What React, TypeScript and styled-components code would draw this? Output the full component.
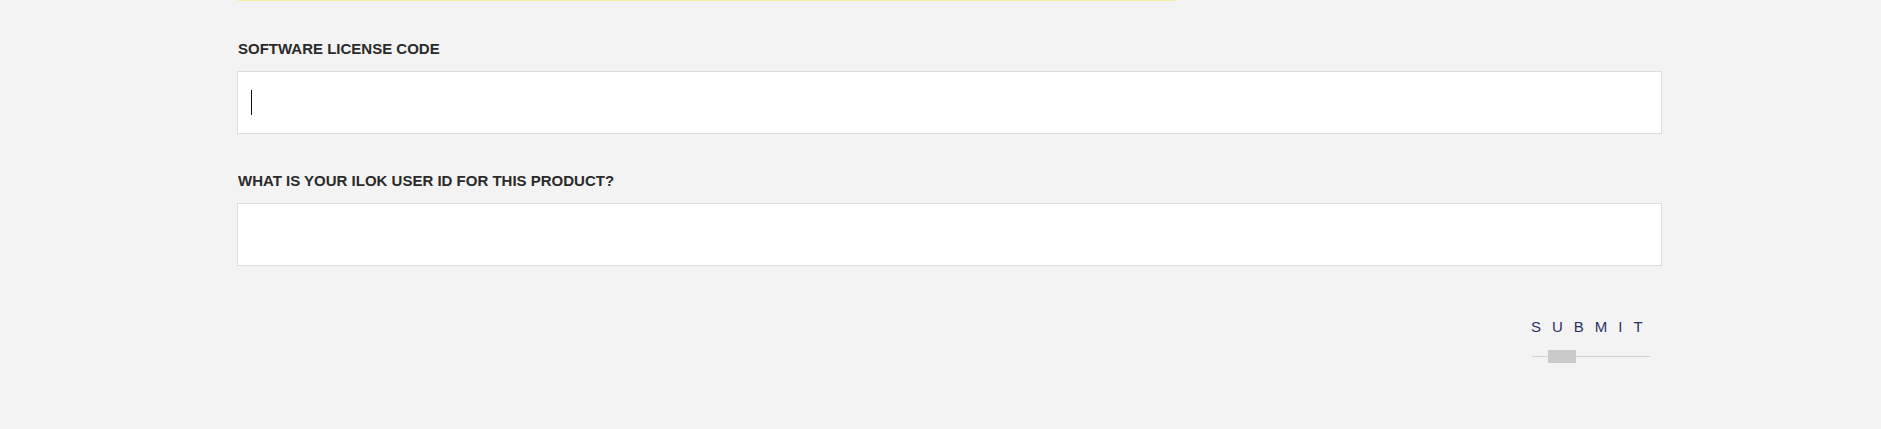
import React from "react";
import styled, { createGlobalStyle } from "styled-components";

const GlobalStyle = createGlobalStyle`
  html, body {
    margin: 0;
    padding: 0;
    background: #f3f3f3;
  }
  body {
    font-family: "Liberation Sans", Arial, sans-serif;
  }
`;

const Page = styled.div`
  width: 1881px;
  min-height: 429px;
  background: #f3f3f3;
  display: flex;
  flex-direction: column;
  box-sizing: border-box;
  padding-left: 237px;
`;

const Form = styled.form`
  width: 1425px;
  display: flex;
  flex-direction: column;
`;

const TopRule = styled.div`
  width: 938px;
  height: 1px;
  margin-left: 1px;
  background: #f6eca2;
`;

const FieldGroup = styled.div<{ $top: number }>`
  display: flex;
  flex-direction: column;
  margin-top: ${(p) => p.$top}px;
`;

const Label = styled.label`
  display: block;
  margin-left: 1px;
  font-family: "Liberation Sans", Arial, sans-serif;
  font-weight: 700;
  font-size: 15px;
  line-height: 18px;
  color: #2a2a2a;
  text-transform: uppercase;
`;

const InputWrap = styled.div`
  position: relative;
  margin-top: 13px;
`;

const TextInput = styled.input`
  display: block;
  width: 100%;
  height: 63px;
  box-sizing: border-box;
  border: 1px solid #dcdcdc;
  background: #ffffff;
  padding: 0 12px;
  margin: 0;
  font-family: "Liberation Sans", Arial, sans-serif;
  font-size: 18px;
  color: #222;
  outline: none;
  caret-color: transparent;
`;

const Caret = styled.span`
  position: absolute;
  left: 14px;
  top: 19px;
  width: 1px;
  height: 25px;
  background: #111;
  pointer-events: none;
`;

const ActionRow = styled.div`
  display: flex;
  justify-content: flex-end;
  padding-right: 12px;
  margin-top: 52px;
`;

const SubmitButton = styled.button`
  width: 118px;
  display: flex;
  flex-direction: column;
  align-items: flex-start;
  gap: 14px;
  padding: 0;
  margin: 0;
  border: none;
  background: transparent;
  cursor: pointer;
`;

const SubmitText = styled.span`
  display: block;
  margin-left: -1px;
  font-family: "Liberation Sans", Arial, sans-serif;
  font-size: 15px;
  line-height: 18px;
  letter-spacing: 11px;
  color: #2d3062;
  white-space: nowrap;
`;

const SliderTrack = styled.span`
  display: block;
  width: 118px;
  height: 13px;
  background:
    linear-gradient(#cacaca, #cacaca) 16px 0 / 28px 13px no-repeat,
    linear-gradient(#d0d0d0, #d0d0d0) 0 6px / 100% 1px no-repeat;
`;

export default function App() {
  return (
    <>
      <GlobalStyle />
      <Page>
        <Form onSubmit={(e) => e.preventDefault()}>
          <TopRule />
          <FieldGroup $top={39}>
            <Label htmlFor="license">Software License Code</Label>
            <InputWrap>
              <TextInput id="license" type="text" />
              <Caret />
            </InputWrap>
          </FieldGroup>
          <FieldGroup $top={38}>
            <Label htmlFor="ilok">What is your iLok User ID for this product?</Label>
            <InputWrap>
              <TextInput id="ilok" type="text" />
            </InputWrap>
          </FieldGroup>
          <ActionRow>
            <SubmitButton type="submit">
              <SubmitText>SUBMIT</SubmitText>
              <SliderTrack />
            </SubmitButton>
          </ActionRow>
        </Form>
      </Page>
    </>
  );
}
